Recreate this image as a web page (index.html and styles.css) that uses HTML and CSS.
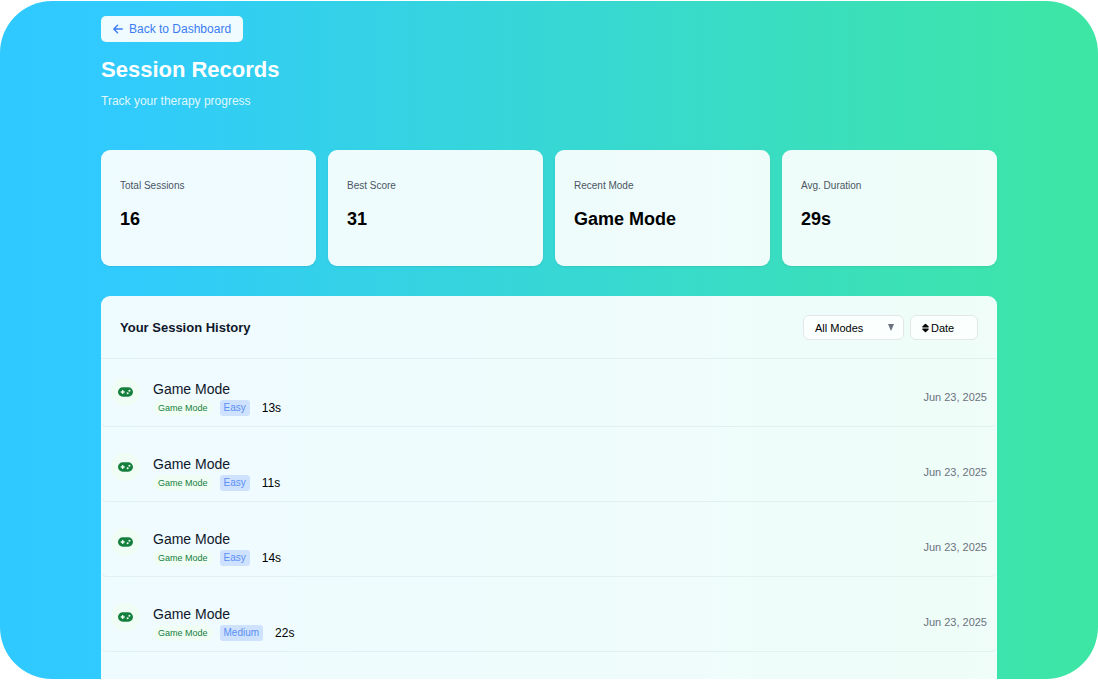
FILE: index.html
```html
<!DOCTYPE html>
<html lang="en">
<head>
<meta charset="utf-8">
<meta name="viewport" content="width=device-width, initial-scale=1">
<title>Session Records</title>
<link rel="stylesheet" href="styles.css">
</head>
<body>
<svg class="sprite" aria-hidden="true">
  <symbol id="gamepad" viewBox="0 0 16 10">
    <path fill="currentColor" fill-rule="evenodd" d="M5 0h6a5 5 0 0 1 0 10H5A5 5 0 0 1 5 0ZM4.300 2.900v1.400H2.900v1.400h1.400v1.400h1.400V5.700h1.400V4.300H5.700V2.900ZM10.300 5.200a1.100 1.100 0 1 0 0 2.200 1.100 1.100 0 0 0 0-2.200ZM12.200 2.500a1.100 1.100 0 1 0 0 2.200 1.100 1.100 0 0 0 0-2.200Z"/>
  </symbol>
</svg>
<div class="frame">
  <main class="page">
    <header class="intro">
      <a class="back" href="#dashboard">
        <svg class="back-icon" viewBox="0 0 10 10" aria-hidden="true"><path d="M9.300 5H1M4.500 1.300.9 5l3.600 3.700" fill="none" stroke="currentColor" stroke-width="1.400" stroke-linecap="round" stroke-linejoin="round"/></svg>
        Back to Dashboard
      </a>
      <h1 class="title">Session Records</h1>
      <p class="subtitle">Track your therapy progress</p>
    </header>

    <section class="stats" aria-label="Summary">
      <div class="stat"><p class="stat-label">Total Sessions</p><p class="stat-value">16</p></div>
      <div class="stat"><p class="stat-label">Best Score</p><p class="stat-value">31</p></div>
      <div class="stat"><p class="stat-label">Recent Mode</p><p class="stat-value">Game Mode</p></div>
      <div class="stat"><p class="stat-label">Avg. Duration</p><p class="stat-value">29s</p></div>
    </section>

    <section class="history">
      <div class="history-head">
        <h2 class="history-title">Your Session History</h2>
        <div class="controls">
          <div class="select-wrap">
            <select class="control mode-select" aria-label="Filter by mode"><option>All Modes</option><option>Game Mode</option></select>
            <svg class="caret" viewBox="0 0 6 7" aria-hidden="true"><path d="M0 0h6L3 7Z" fill="currentColor"/></svg>
          </div>
          <button class="control sort" type="button">
            <svg class="sort-icon" viewBox="0 0 8 10" aria-hidden="true"><path d="M3.400.3a.9.9 0 0 1 1.200 0L7.600 3.300c.5.500.2 1.100-.5 1.100H.9C.2 4.400-.1 3.800.4 3.300ZM3.400 9.700a.9.9 0 0 0 1.200 0L7.600 6.700c.5-.5.2-1.100-.5-1.100H.9C.2 5.600-.1 6.200.4 6.700Z" fill="currentColor"/></svg>
            Date
          </button>
        </div>
      </div>
      <ul class="list">
        <li class="row">
          <span class="row-icon"><svg class="pad" aria-hidden="true"><use href="#gamepad"/></svg></span>
          <div class="row-body"><h3 class="row-title">Game Mode</h3><div class="meta"><span class="mode">Game Mode</span><span class="level">Easy</span><span class="time">13s</span></div></div>
          <time class="date" datetime="2025-06-23">Jun 23, 2025</time>
        </li>
        <li class="row">
          <span class="row-icon"><svg class="pad" aria-hidden="true"><use href="#gamepad"/></svg></span>
          <div class="row-body"><h3 class="row-title">Game Mode</h3><div class="meta"><span class="mode">Game Mode</span><span class="level">Easy</span><span class="time">11s</span></div></div>
          <time class="date" datetime="2025-06-23">Jun 23, 2025</time>
        </li>
        <li class="row">
          <span class="row-icon"><svg class="pad" aria-hidden="true"><use href="#gamepad"/></svg></span>
          <div class="row-body"><h3 class="row-title">Game Mode</h3><div class="meta"><span class="mode">Game Mode</span><span class="level">Easy</span><span class="time">14s</span></div></div>
          <time class="date" datetime="2025-06-23">Jun 23, 2025</time>
        </li>
        <li class="row">
          <span class="row-icon"><svg class="pad" aria-hidden="true"><use href="#gamepad"/></svg></span>
          <div class="row-body"><h3 class="row-title">Game Mode</h3><div class="meta"><span class="mode">Game Mode</span><span class="level">Medium</span><span class="time">22s</span></div></div>
          <time class="date" datetime="2025-06-23">Jun 23, 2025</time>
        </li>
      </ul>
    </section>
  </main>
</div>
</body>
</html>
```
FILE: styles.css
```css
*, *::before, *::after { box-sizing: border-box; }

html { background: #fff; }

body {
  margin: 0;
  padding: 1px 0;
  height: 100vh;
  overflow: hidden;
  font-family: "Liberation Sans", Arial, Helvetica, sans-serif;
  color: #000;
}

h1, h2, h3, p, ul { margin: 0; padding: 0; }

.sprite { display: none; }

.frame {
  height: 100%;
  overflow: hidden;
  border-radius: 52px;
  background: linear-gradient(90deg, #2fc9ff 0%, #30caff 8%, #3ee6a4 100%);
}

.page {
  display: flex;
  flex-direction: column;
  max-width: 896px;
  min-height: 100%;
  margin: 0 auto;
  padding-top: 15px;
}

.intro {
  display: flex;
  flex-direction: column;
  align-items: flex-start;
  margin-bottom: 41px;
}

.back {
  display: flex;
  align-items: center;
  gap: 6px;
  padding: 5px 12px;
  border-radius: 5px;
  background: rgba(255, 255, 255, 0.92);
  color: #3b7cf3;
  font-size: 12px;
  line-height: 16px;
  text-decoration: none;
}

.back-icon { width: 10px; height: 10px; }

.title {
  margin-top: 14px;
  color: #fff;
  font-size: 22px;
  line-height: 28px;
}

.subtitle {
  margin-top: 9px;
  color: rgba(255, 255, 255, 0.86);
  font-size: 12px;
  line-height: 16px;
}

.stats {
  display: grid;
  grid-template-columns: repeat(4, 1fr);
  gap: 12px;
  margin-bottom: 30px;
}

.stat {
  padding: 29px 19px 35px;
  border-radius: 9px;
  background: rgba(255, 255, 255, 0.92);
  box-shadow: 0 1px 2px rgba(0, 0, 0, 0.08);
}

.stat-label {
  margin-bottom: 14px;
  color: #4b5563;
  font-size: 10px;
  line-height: 14px;
}

.stat-value {
  font-size: 18px;
  font-weight: 700;
  line-height: 24px;
}

.history {
  flex: 1;
  border-radius: 9px 9px 0 0;
  background: rgba(255, 255, 255, 0.92);
}

.history-head {
  display: flex;
  align-items: center;
  justify-content: space-between;
  padding: 19px 19px 18px;
  border-bottom: 1px solid rgba(15, 60, 90, 0.06);
}

.history-title {
  color: #0f172a;
  font-size: 13px;
  line-height: 20px;
}

.controls { display: flex; gap: 6px; }

.select-wrap { position: relative; }

.control {
  height: 25px;
  margin: 0;
  border: 1px solid #e2e8ea;
  border-radius: 6px;
  background: rgba(255, 255, 255, 0.75);
  color: #000;
  font-family: inherit;
  font-size: 11px;
  line-height: 16px;
}

.mode-select {
  display: block;
  width: 101px;
  padding: 0 20px 0 11px;
  appearance: none;
}

.caret {
  position: absolute;
  top: 9px;
  right: 10px;
  width: 6px;
  height: 7px;
  color: #6b7280;
  pointer-events: none;
}

.sort {
  display: flex;
  align-items: center;
  gap: 2px;
  width: 68px;
  padding: 0 11px;
}

.sort-icon { flex: none; width: 7px; height: 10px; }

.list {
  display: flex;
  flex-direction: column;
  gap: 7px;
  list-style: none;
}

.row {
  display: flex;
  align-items: center;
  gap: 13px;
  padding: 19px 10px 10px;
  border-bottom: 1px solid rgba(15, 60, 90, 0.06);
  border-radius: 6px;
}

.row-icon {
  display: flex;
  align-items: center;
  justify-content: center;
  align-self: flex-start;
  width: 29px;
  height: 28px;
  border-radius: 50%;
  background: #f0fdf4;
  color: #15803d;
}

.pad { width: 15px; height: 10px; }

.row-body { flex: 1; }

.row-title {
  color: #0f172a;
  font-size: 14px;
  font-weight: 400;
  line-height: 22px;
}

.meta { display: flex; align-items: center; }

.mode {
  padding: 0 5px;
  border-radius: 8px;
  background: #f0fdf4;
  color: #15803d;
  font-size: 9px;
  line-height: 16px;
}

.level {
  margin: 0 12px 0 7px;
  padding: 0 4px;
  border-radius: 3px;
  background: #cfe2fd;
  color: #5b8ff5;
  font-size: 10px;
  line-height: 16px;
}

.time { font-size: 12px; line-height: 16px; }

.date {
  color: #6b7280;
  font-size: 11px;
  line-height: 16px;
}
```
